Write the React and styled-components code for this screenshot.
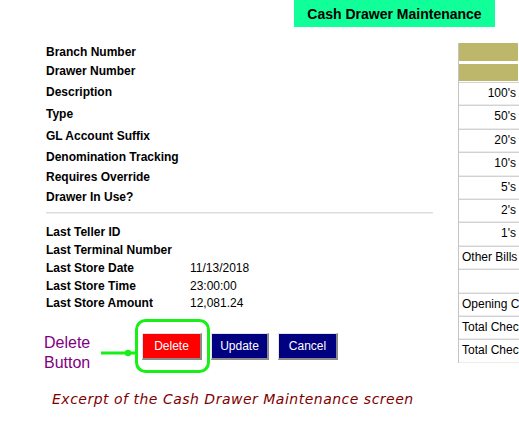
import React from "react";
import styled, { createGlobalStyle } from "styled-components";

const GlobalStyle = createGlobalStyle`
  html, body {
    margin: 0;
    padding: 0;
    background: #fff;
  }
  body {
    font-family: "Liberation Sans", Arial, sans-serif;
    color: #000;
  }
`;

const Page = styled.div`
  width: 519px;
  height: 435px;
  overflow: hidden;
  position: relative;
`;

const Header = styled.div`
  display: flex;
  padding-left: 294px;
`;

const TitleBox = styled.div`
  width: 201px;
  height: 27px;
  background: #11ff99;
  display: flex;
  align-items: center;
  justify-content: center;
  font-size: 14px;
  font-weight: bold;
  color: #000;
`;

const Body = styled.div`
  display: flex;
  margin-top: 16px;
`;

const LeftPanel = styled.div`
  width: 458px;
  flex: none;
  display: flex;
  flex-direction: column;
`;

const FieldRow = styled.div`
  display: flex;
  align-items: center;
  height: ${(p) => p.$h}px;
  padding-left: 46px;
  font-size: 12px;
  white-space: nowrap;
`;

const Label = styled.div`
  width: 144px;
  font-weight: bold;
`;

const Value = styled.div`
  font-weight: normal;
`;

const Separator = styled.div`
  margin: 6px 25px 9px 46px;
  height: 1px;
  background: #dcdcdc;
  border-bottom: 1px solid #f0f0f0;
`;

const ActionRow = styled.div`
  position: relative;
  display: flex;
  align-items: flex-start;
  margin-top: 21px;
  padding-left: 44px;
`;

const Annotation = styled.div`
  width: 98px;
  font-size: 16px;
  line-height: 20px;
  color: #800080;
`;

const Buttons = styled.div`
  display: flex;
  gap: 9px;
`;

const Button = styled.button`
  width: ${(p) => p.$w}px;
  height: 27px;
  box-sizing: border-box;
  padding: 0;
  margin: 0;
  background: ${(p) => p.$bg};
  color: #fff;
  font-family: "Liberation Sans", Arial, sans-serif;
  font-size: 12px;
  border-top: 1px solid #e4e4e4;
  border-left: 1px solid #e4e4e4;
  border-right: 2px solid #8a8a8a;
  border-bottom: 2px solid #8a8a8a;
  cursor: pointer;
`;

const Highlight = styled.svg`
  position: absolute;
  left: 0;
  top: -14px;
  overflow: visible;
  pointer-events: none;
`;

const RightPanel = styled.div`
  flex: none;
  border-left: 1px solid #c4c4c4;
  display: flex;
  flex-direction: column;
  height: 320px;
`;

const OliveBar = styled.div`
  width: 59px;
  height: ${(p) => p.$h}px;
  margin-bottom: ${(p) => p.$mb}px;
  background: #bdb76b;
`;

const Cell = styled.div`
  width: 64px;
  height: 23.4px;
  box-sizing: border-box;
  border-top: 1px solid #d2d2d2;
  border-bottom: 1px solid #ececec;
  padding: 0 7px 0 3px;
  font-size: 12px;
  line-height: 21px;
  white-space: nowrap;
  overflow: hidden;
  text-align: ${(p) => p.$align};
`;

const Caption = styled.div`
  margin-top: 16px;
  padding-left: 52px;
  font-family: "DejaVu Sans", Verdana, sans-serif;
  font-style: italic;
  font-size: 14px;
  letter-spacing: 0.5px;
  line-height: 20px;
  color: #800000;
`;

const topFields = [
  ["Branch Number", 18],
  ["Drawer Number", 20],
  ["Description", 21],
  ["Type", 23],
  ["GL Account Suffix", 22],
  ["Denomination Tracking", 20],
  ["Requires Override", 20],
  ["Drawer In Use?", 19],
];

const bottomFields = [
  ["Last Teller ID", "", 18],
  ["Last Terminal Number", "", 18],
  ["Last Store Date", "11/13/2018", 18],
  ["Last Store Time", "23:00:00", 17],
  ["Last Store Amount", "12,081.24", 18],
];

const cells = [
  ["100's", "right"],
  ["50's", "right"],
  ["20's", "right"],
  ["10's", "right"],
  ["5's", "right"],
  ["2's", "right"],
  ["1's", "right"],
  ["Other Bills", "left"],
  ["", "left"],
  ["Opening Cash", "left"],
  ["Total Checks In", "left"],
  ["Total Checks Out", "left"],
];

export default function App() {
  return (
    <Page>
      <GlobalStyle />
      <Header>
        <TitleBox>Cash Drawer Maintenance</TitleBox>
      </Header>
      <Body>
        <LeftPanel>
          {topFields.map(([label, h]) => (
            <FieldRow key={label} $h={h}>
              <Label>{label}</Label>
            </FieldRow>
          ))}
          <Separator />
          {bottomFields.map(([label, value, h]) => (
            <FieldRow key={label} $h={h}>
              <Label>{label}</Label>
              <Value>{value}</Value>
            </FieldRow>
          ))}
          <ActionRow>
            <Annotation>
              Delete
              <br />
              Button
            </Annotation>
            <Buttons>
              <Button $bg="#ff0000" $w={60}>Delete</Button>
              <Button $bg="#000080" $w={58}>Update</Button>
              <Button $bg="#000080" $w={60}>Cancel</Button>
            </Buttons>
            <Highlight width="220" height="60">
              <rect
                x="136.5"
                y="1.5"
                width="72"
                height="51"
                rx="9"
                fill="none"
                stroke="#16f016"
                strokeWidth="3"
              />
              <line
                x1="101"
                y1="34"
                x2="136"
                y2="34"
                stroke="#16f016"
                strokeWidth="3"
              />
              <circle cx="128" cy="34" r="3.2" fill="#16f016" />
            </Highlight>
          </ActionRow>
        </LeftPanel>
        <RightPanel>
          <OliveBar $h={18} $mb={3} />
          <OliveBar $h={17} $mb={1} />
          {cells.map(([text, align], i) => (
            <Cell key={i} $align={align}>
              {text}
            </Cell>
          ))}
        </RightPanel>
      </Body>
      <Caption>Excerpt of the Cash Drawer Maintenance screen</Caption>
    </Page>
  );
}
